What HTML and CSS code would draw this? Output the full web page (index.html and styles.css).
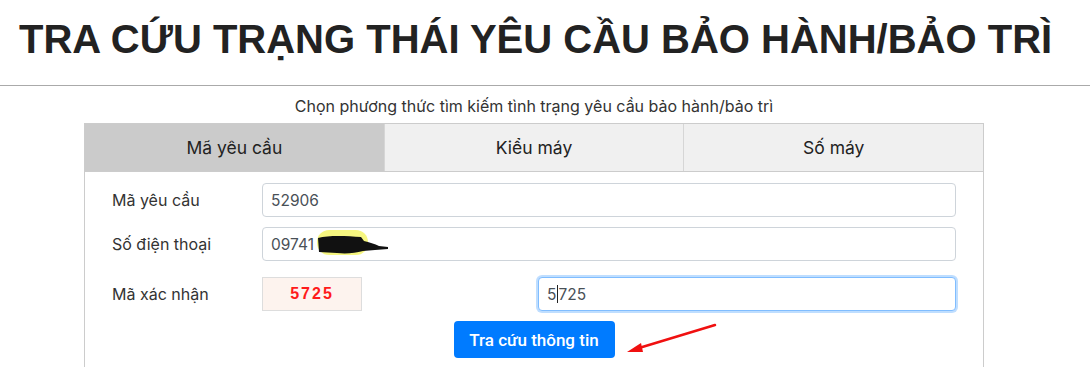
FILE: index.html
```html
<!DOCTYPE html>
<html lang="vi">
<head>
    <meta charset="UTF-8">
    <meta name="viewport" content="width=device-width, initial-scale=1.0">
    <title>Tra cứu trạng thái yêu cầu</title>
    <link rel="stylesheet" href="styles.css">
</head>
<body>
    <header class="page-header">
        <h1>TRA CỨU TRẠNG THÁI YÊU CẦU BẢO HÀNH/BẢO TRÌ</h1>
    </header>

    <main class="page">
        <p class="intro">Chọn phương thức tìm kiếm tình trạng yêu cầu bảo hành/bảo trì</p>

        <div class="search-card">
            <div class="tabs">
                <div class="tab active">Mã yêu cầu</div>
                <div class="tab">Kiểu máy</div>
                <div class="tab">Số máy</div>
            </div>

            <form class="search-form">
                <div class="form-row">
                    <label for="ticket">Mã yêu cầu</label>
                    <input type="text" id="ticket" class="form-control" value="52906">
                </div>
                <div class="form-row">
                    <label for="phone">Số điện thoại</label>
                    <div class="field-wrap">
                        <input type="text" id="phone" class="form-control" value="09741">
                        <!-- redaction scribble from the screenshot -->
                        <svg class="scribble" width="80" height="30" viewBox="0 0 80 30">
                            <rect x="0" y="1" width="51" height="25" rx="12" fill="#f5f56a" opacity="0.85"/>
                            <path d="M1 9 C 12 6, 30 7, 44 8 L 47 12 C 52 13, 58 15, 62 17 L 71 18 L 71 20 L 58 21 L 46 22 C 38 24, 30 25, 20 24 L 2 23 Z" fill="#111"/>
                        </svg>
                    </div>
                </div>
                <div class="form-row captcha-row">
                    <label for="captcha">Mã xác nhận</label>
                    <div class="captcha-cell">
                        <div class="captcha-code">5725</div>
                    </div>
                    <div class="form-control focused" id="captcha">5<span class="caret"></span>725</div>
                </div>
                <div class="actions">
                    <button type="button" class="btn-primary">Tra cứu thông tin</button>
                </div>
            </form>

            <svg class="arrow" width="100" height="40" viewBox="0 0 100 40">
                <line x1="94" y1="6" x2="18" y2="29" stroke="#f01010" stroke-width="2.5" stroke-linecap="round"/>
                <polygon points="6,33 20,24 22,33" fill="#f01010"/>
            </svg>
        </div>
    </main>
</body>
</html>
```

FILE: styles.css
```css
* {
    margin: 0;
    padding: 0;
    box-sizing: border-box;
}

:root {
    --border-color: #cccccc;
    --text-color: #222222;
    --input-border: #ced4da;
    --primary-color: #007bff;
}

body {
    font-family: Inter, 'Noto Sans', sans-serif;
    color: var(--text-color);
    background-color: white;
}

.page-header {
    padding: 15px 19px 22px;
    border-bottom: 1px solid #aaaaaa;
}

.page-header h1 {
    font-family: 'Liberation Sans', Arial, sans-serif;
    font-weight: bold;
    font-size: 40px;
    line-height: 48px;
    color: #222;
    white-space: nowrap;
}

.page {
    width: 1068px;
}

.intro {
    text-align: center;
    font-size: 16px;
    line-height: 18px;
    color: #333;
    margin-top: 11px;
    margin-bottom: 8px;
}

.search-card {
    position: relative;
    width: 900px;
    margin: 0 auto;
    border: 1px solid var(--border-color);
    border-bottom: none;
}

.tabs {
    display: flex;
    height: 48px;
    border-bottom: 1px solid var(--border-color);
}

.tab {
    flex: 1;
    display: flex;
    align-items: center;
    justify-content: center;
    font-size: 17.5px;
    background-color: #f0f0f0;
    border-left: 1px solid #d6d6d6;
}

.tab:first-child {
    border-left: none;
}

.tab.active {
    background-color: #cbcbcb;
}

.search-form {
    padding: 11px 27px 9px;
}

.form-row {
    display: flex;
    align-items: center;
    margin-bottom: 10px;
}

.form-row label {
    width: 150px;
    flex-shrink: 0;
    font-size: 16px;
    color: #333;
}

.field-wrap {
    position: relative;
    flex: 1;
}

.form-control {
    display: block;
    width: 100%;
    height: 34px;
    padding: 0 8px;
    font-family: Inter, 'Noto Sans', sans-serif;
    font-size: 15.5px;
    color: #495057;
    background-color: white;
    border: 1px solid var(--input-border);
    border-radius: 4px;
}

.form-row > .form-control {
    flex: 1;
}

.scribble {
    position: absolute;
    left: 55px;
    top: 2px;
}

.captcha-row {
    margin-top: 16px;
}

.captcha-cell {
    width: 276px;
    flex-shrink: 0;
}

.captcha-code {
    width: 100px;
    height: 34px;
    display: flex;
    align-items: center;
    justify-content: center;
    background-color: #fdf3ee;
    border: 1px solid #dddddd;
    font-family: 'Liberation Sans', Arial, sans-serif;
    font-weight: bold;
    font-size: 16px;
    letter-spacing: 2px;
    color: #ff1a1a;
}

.form-control.focused {
    display: flex;
    align-items: center;
    border-color: #80bdff;
    box-shadow: 0 0 0 2px rgba(0, 123, 255, 0.25);
}

.caret {
    display: inline-block;
    width: 1px;
    height: 18px;
    background-color: #222;
    margin: 0 0.5px;
}

.actions {
    display: flex;
    justify-content: center;
}

.btn-primary {
    width: 161px;
    height: 37px;
    border: none;
    border-radius: 4px;
    background-color: var(--primary-color);
    color: white;
    font-family: Roboto, 'Liberation Sans', sans-serif;
    font-size: 17px;
    font-weight: 500;
    cursor: pointer;
}

.arrow {
    position: absolute;
    left: 536px;
    top: 195px;
}
```
